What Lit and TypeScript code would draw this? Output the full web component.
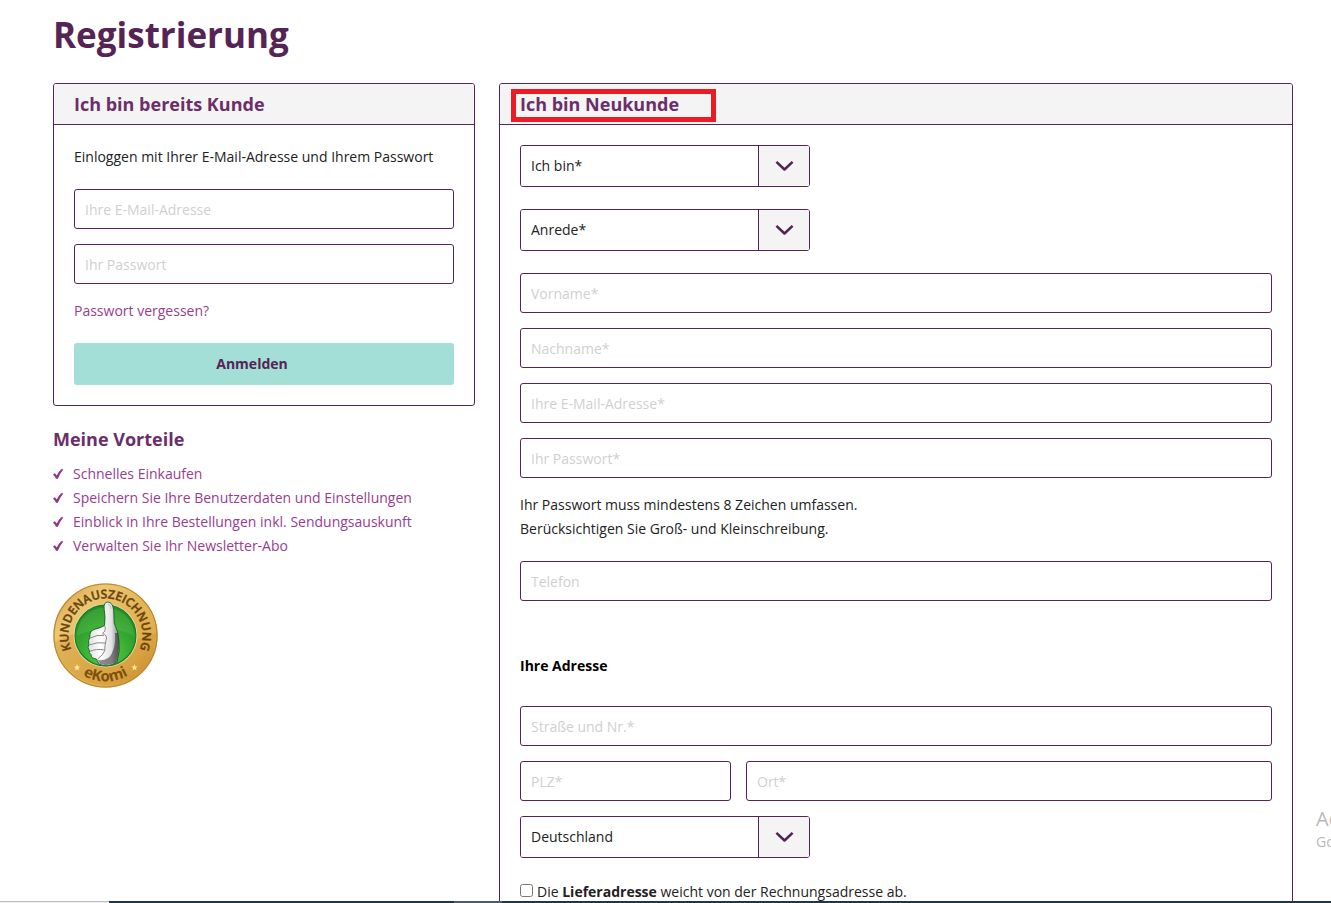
import { LitElement, html, css, svg } from "lit";
import { customElement, property } from "lit/decorators.js";

const fieldStyles = css`
  :host {
    display: block;
    min-width: 0;
  }
  * {
    box-sizing: border-box;
  }
  .field {
    display: block;
  }
`;

@customElement("form-input")
class FormInput extends LitElement {
  @property() label = "";
  @property() type = "text";

  static styles = [
    fieldStyles,
    css`
      .input {
        display: block;
        width: 100%;
        height: 40px;
        padding: 0 10px;
        border: 1px solid #552455;
        border-radius: 3px;
        background: #fff;
        color: #222;
        font: 400 14px/24px "Open Sans", sans-serif;
      }
      .input::placeholder {
        color: #d0d0d0;
        opacity: 1;
      }
    `,
  ];

  render() {
    return html`
      <label class="field">
        <input class="input" type=${this.type} placeholder=${this.label} aria-label=${this.label} />
      </label>
    `;
  }
}

@customElement("form-select")
class FormSelect extends LitElement {
  @property() label = "";
  @property({ type: Array }) options: string[] = [];

  static styles = [
    fieldStyles,
    css`
      .wrap {
        position: relative;
        display: flex;
        max-width: 290px;
        height: 42px;
        border: 1px solid #552455;
        border-radius: 3px;
        overflow: hidden;
      }
      .select {
        flex: 1;
        width: 100%;
        appearance: none;
        border: 0;
        padding: 0 60px 0 10px;
        background: #fff;
        color: #222;
        font: 400 14px/24px "Open Sans", sans-serif;
      }
      .arrow {
        position: absolute;
        inset: 0 0 0 auto;
        width: 51px;
        display: grid;
        place-items: center;
        border-left: 1px solid #552455;
        background: #f4f4f4;
        pointer-events: none;
      }
    `,
  ];

  render() {
    return html`
      <label class="field wrap">
        <select class="select" aria-label=${this.label}>
          ${this.options.map((o) => html`<option>${o}</option>`)}
        </select>
        <span class="arrow">
          <svg width="20" height="12" viewBox="0 0 20 12" aria-hidden="true">
            <path d="M2.4 1.9 L10.5 9.5 L18.6 1.9" fill="none" stroke="#552455" stroke-width="2.6" stroke-linecap="butt" stroke-linejoin="round" />
          </svg>
        </span>
      </label>
    `;
  }
}

@customElement("award-badge")
class AwardBadge extends LitElement {
  static styles = css`
    :host {
      display: block;
    }
    .seal {
      display: block;
    }
    .lettering {
      font: 600 12px "Open Sans", sans-serif;
      fill: #6b430d;
      stroke: #6b430d;
      stroke-width: 0.4px;
    }
    .brand {
      font: 700 15px "Open Sans", sans-serif;
      fill: #7d4f10;
    }
  `;

  private star(x: number, y: number) {
    return svg`<path transform="translate(${x} ${y})" fill="#ffe9a0" d="M0 -3.4 L.9 -1.1 L3.3 -1 L1.4 .5 L2.1 2.9 L0 1.5 L-2.1 2.9 L-1.4 .5 L-3.3 -1 L-.9 -1.1 Z"/>`;
  }

  render() {
    return html`
      <svg class="seal" width="106" height="106" viewBox="0 0 106 106" role="img" aria-label="eKomi Kundenauszeichnung">
        <defs>
          <linearGradient id="gold" x1="0" y1="0" x2="1" y2="1">
            <stop offset="0" stop-color="#c99238" />
            <stop offset=".25" stop-color="#ebc873" />
            <stop offset=".5" stop-color="#e3b758" />
            <stop offset=".75" stop-color="#e0ac4a" />
            <stop offset="1" stop-color="#b47a20" />
          </linearGradient>
          <radialGradient id="green" cx=".5" cy=".8" r=".8">
            <stop offset="0" stop-color="#5fd048" />
            <stop offset=".5" stop-color="#36ab31" />
            <stop offset="1" stop-color="#218c26" />
          </radialGradient>
          <linearGradient id="hand" x1="0" y1="0" x2="1" y2="0">
            <stop offset="0" stop-color="#dedede" />
            <stop offset=".4" stop-color="#fff" />
            <stop offset=".75" stop-color="#e2e2e2" />
            <stop offset="1" stop-color="#777" />
          </linearGradient>
          <path id="top-arc" d="M20.5 71 A37 37 0 1 1 84.5 71" />
          <path id="bottom-arc" d="M17 81 A45 45 0 0 0 88 81" />
        </defs>
        <circle cx="52.5" cy="52.5" r="52.2" fill="url(#gold)" />
        <circle cx="52.5" cy="52.5" r="51.5" fill="none" stroke="#bd8630" stroke-width="1.2" />
        <path d="M2 59 Q28 43 52 53 T103 50 A51 51 0 0 1 3 65 Z" fill="#cb9030" opacity=".3" />
        <circle cx="52.5" cy="52.5" r="32" fill="#ecd79a" />
        <circle cx="52.5" cy="52.5" r="30.4" fill="url(#green)" stroke="#1d7a2a" stroke-width="1.2" />
        <path d="M24 53 A28.5 28.5 0 0 1 81 53 Q53 38 24 53 Z" fill="#7cd66a" opacity=".22" />
        <path
          d="M46 81 L43.5 76 Q38 75.5 38 71.5 Q35.5 70 36.4 67.5 Q34 65 35.8 61.5 Q34.8 57 36.8 54.5 Q36.2 47.5 42 46.2 Q48 44.8 51.6 42.4 Q52.6 33 51.2 26.5 Q50.2 19.4 54.6 19 Q60 19 60.8 28 L61.2 40 Q65.4 48 66 58 Q67.4 68 64 79 Q54 85.5 46 81 Z"
          fill="url(#hand)"
          stroke="#145f22"
          stroke-width=".9"
        />
        <path d="M65 50 Q67.4 66 63 79 Q55 84 47 81 L45 77 Q55 78 58.5 71 Q63 62 62 50 Z" fill="#2c2c2c" opacity=".55" />
        <path d="M51.8 43 Q53.5 48 49.4 50.5 Q55 52 53 57.5 L52 63 Q53 68 49 72 L45 75.6" fill="none" stroke="#8c8c8c" stroke-width="1" />
        <path d="M37.2 55 Q44 51.4 51 52.4 M36.2 62 Q44 58.6 53 60 M36.8 68.4 Q43 65.4 52 67" fill="none" stroke="#8a8a8a" stroke-width="1" />
        <path d="M54.4 21.8 Q57.8 21 58.2 26" fill="none" stroke="#bbb" stroke-width=".9" />
        <text class="lettering"><textPath href="#top-arc" startOffset="50%" text-anchor="middle">KUNDENAUSZEICHNUNG</textPath></text>
        <text class="brand"><textPath href="#bottom-arc" startOffset="50%" text-anchor="middle">eKomi</textPath></text>
        ${this.star(24, 84.5)} ${this.star(81.5, 84.5)}
      </svg>
    `;
  }
}

@customElement("app-root")
class AppRoot extends LitElement {
  static styles = css`
    :host {
      display: block;
      position: relative;
      height: 100vh;
      overflow: hidden;
      background: #fff;
      color: #222;
      font: 400 14px/24px "Open Sans", sans-serif;
    }
    * {
      box-sizing: border-box;
    }
    h1,
    h2,
    h3,
    p,
    ul {
      margin: 0;
      padding: 0;
    }
    .page {
      padding: 10px 38px 0 53px;
    }
    .title {
      color: #552455;
      font-size: 35px;
      line-height: 49px;
      font-weight: 700;
    }
    .columns {
      display: grid;
      grid-template-columns: 211fr 397fr;
      gap: 24px;
      align-items: start;
      margin-top: 24px;
    }
    .panel {
      border: 1px solid #552455;
      border-radius: 3px;
    }
    .panel-head {
      position: relative;
      padding: 8px 20px;
      border-bottom: 1px solid #552455;
      border-radius: 2px 2px 0 0;
      background: #f4f4f4;
    }
    .heading {
      color: #6c2e6a;
      font-size: 18px;
      line-height: 24px;
      font-weight: 700;
    }
    .marker {
      position: absolute;
      inset: 5px auto auto 11px;
      width: 205px;
      height: 33px;
      border: 5px solid #ed1c24;
      pointer-events: none;
    }
    .panel-body {
      padding: 20px;
    }
    .stack {
      display: flex;
      flex-direction: column;
      gap: 15px;
    }
    .login-fields {
      margin: 20px 0 15px;
    }
    .link {
      color: #983d8e;
      text-decoration: none;
    }
    .submit {
      display: block;
      width: 100%;
      height: 42px;
      margin-top: 20px;
      padding: 0 24px 0 0;
      border: 0;
      border-radius: 3px;
      background: #a3ded7;
      color: #552455;
      font: 700 14px/24px "Open Sans", sans-serif;
    }
    .benefits {
      margin-top: 21px;
    }
    .benefit-list {
      margin: 11px 0 25px;
      list-style: none;
    }
    .benefit {
      display: flex;
      align-items: center;
      gap: 9px;
    }
    .choices {
      display: flex;
      flex-direction: column;
      gap: 22px;
      margin-bottom: 22px;
    }
    .hint {
      margin: 15px 0 20px;
    }
    .subheading {
      margin: 53px 0 28px;
      color: #000;
      font-size: 14px;
      line-height: 24px;
      font-weight: 700;
    }
    .city-row {
      display: grid;
      grid-template-columns: 211fr 526fr;
      gap: 15px;
    }
    .check {
      display: flex;
      align-items: center;
      gap: 4px;
      margin-top: 22px;
    }
    .tick {
      width: 13px;
      height: 13px;
      margin: 0 0 3px;
    }
    .watermark {
      position: absolute;
      right: 0;
      bottom: 51px;
      width: 15px;
      color: #b9b9b9;
      white-space: nowrap;
      line-height: 21px;
    }
    .watermark-title {
      font-size: 20px;
      line-height: 24px;
    }
    .taskbar {
      position: absolute;
      inset: auto 0 0 0;
      display: flex;
      height: 2px;
      background: #203645;
    }
    .search {
      width: 109px;
      border-top: 1px solid #bcbcbc;
      background: #f0f0f0;
    }
    .active {
      width: 48px;
      margin-left: 345px;
      background: #4b5d6b;
    }
  `;

  private benefits = [
    "Schnelles Einkaufen",
    "Speichern Sie Ihre Benutzerdaten und Einstellungen",
    "Einblick in Ihre Bestellungen inkl. Sendungsauskunft",
    "Verwalten Sie Ihr Newsletter-Abo",
  ];

  render() {
    return html`
      <main class="page">
        <h1 class="title">Registrierung</h1>
        <div class="columns">
          <div>
            <section class="panel">
              <header class="panel-head"><h2 class="heading">Ich bin bereits Kunde</h2></header>
              <div class="panel-body">
                <p>Einloggen mit Ihrer E-Mail-Adresse und Ihrem Passwort</p>
                <div class="stack login-fields">
                  <form-input label="Ihre E-Mail-Adresse" type="email"></form-input>
                  <form-input label="Ihr Passwort" type="password"></form-input>
                </div>
                <a class="link" href="#">Passwort vergessen?</a>
                <button class="submit" type="button">Anmelden</button>
              </div>
            </section>
            <section class="benefits">
              <h2 class="heading">Meine Vorteile</h2>
              <ul class="benefit-list">
                ${this.benefits.map(
                  (b) => html`<li class="benefit">
                    <svg width="11" height="10" viewBox="0 0 11 10" aria-hidden="true">
                      <path d="M0 5.4 L2 4.3 L3.7 6.5 Q5.6 2.6 8.2 .2 L10.4 .2 Q7 4.4 4.8 9.8 L2.9 9.8 Q1.9 7.2 0 5.4 Z" fill="#8f3583" />
                    </svg>
                    <a class="link" href="#">${b}</a>
                  </li>`
                )}
              </ul>
              <award-badge></award-badge>
            </section>
          </div>
          <section class="panel">
            <header class="panel-head">
              <h2 class="heading">Ich bin Neukunde</h2>
              <span class="marker"></span>
            </header>
            <div class="panel-body">
              <div class="choices">
                <form-select label="Ich bin" .options=${["Ich bin*", "Privatkunde", "Firma"]}></form-select>
                <form-select label="Anrede" .options=${["Anrede*", "Frau", "Herr"]}></form-select>
              </div>
              <div class="stack">
                <form-input label="Vorname*"></form-input>
                <form-input label="Nachname*"></form-input>
                <form-input label="Ihre E-Mail-Adresse*" type="email"></form-input>
                <form-input label="Ihr Passwort*" type="password"></form-input>
              </div>
              <p class="hint">
                Ihr Passwort muss mindestens 8 Zeichen umfassen.<br />
                Berücksichtigen Sie Groß- und Kleinschreibung.
              </p>
              <form-input label="Telefon" type="tel"></form-input>
              <h3 class="subheading">Ihre Adresse</h3>
              <div class="stack">
                <form-input label="Straße und Nr.*"></form-input>
                <div class="city-row">
                  <form-input label="PLZ*"></form-input>
                  <form-input label="Ort*"></form-input>
                </div>
                <form-select label="Land" .options=${["Deutschland", "Österreich"]}></form-select>
              </div>
              <div class="check">
                <input class="tick" id="delivery" type="checkbox" />
                <label for="delivery">Die <b>Lieferadresse</b> weicht von der Rechnungsadresse ab.</label>
              </div>
            </div>
          </section>
        </div>
      </main>
      <div class="watermark">
        <div class="watermark-title">Ac</div>
        <div>Go</div>
      </div>
      <div class="taskbar"><span class="search"></span><span class="active"></span></div>
    `;
  }
}
